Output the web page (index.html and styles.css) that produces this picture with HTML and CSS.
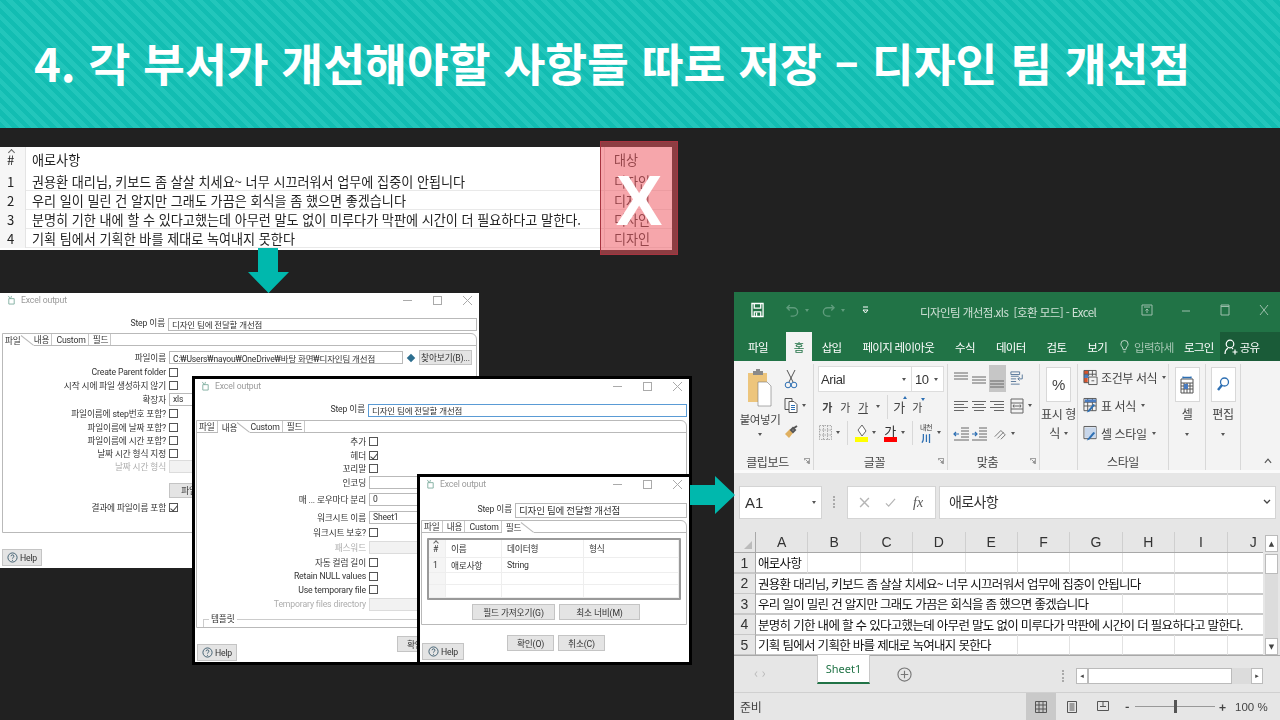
FILE: index.html
```html
<!DOCTYPE html>
<html lang="ko">
  <head>
    <meta charset="UTF-8" />
    <title>4. 각 부서가 개선해야할 사항들 따로 저장</title>
    <link rel="stylesheet" href="styles.css">
  </head>
  <body>
    <svg class="defs" width="0" height="0">
      <symbol id="lines-left" viewBox="0 0 16 12"><path d="M1 1.5h14M1 4.5h10M1 7.5h14M1 10.5h10" /></symbol>
      <symbol id="lines-center" viewBox="0 0 16 12"><path d="M1 1.5h14M3 4.5h10M1 7.5h14M3 10.5h10" /></symbol>
      <symbol id="lines-right" viewBox="0 0 16 12"><path d="M1 1.5h14M5 4.5h10M1 7.5h14M5 10.5h10" /></symbol>
      <symbol id="help-mark" viewBox="0 0 12 12"><circle cx="6" cy="6" r="5" /><path d="M4.4 4.6c0-2 3.2-2 3.2 0 0 1.3-1.6 1.2-1.6 2.6M6 8.6v1" /></symbol>
      <symbol id="launcher" viewBox="0 0 8 8"><path d="M.5 3V.5H7.5V7.5H5M2 2l4 4M6 3.5V6H3.5" /></symbol>
      <symbol id="win-icon" viewBox="0 0 10 11"><path d="M2 4h6v6H2zM1.500 1l2 3M4 4l1-3" /></symbol>
    </svg>

    <div class="slide">
      <header class="banner">
        <h1>4. 각 부서가 개선해야할 사항들 따로 저장 – 디자인 팀 개선점</h1>
      </header>

      <!-- list of complaints with the column that gets dropped -->
      <div class="list">
        <div class="list-row list-head">
          <span class="list-num"><i class="caret"></i>#</span>
          <span class="list-text">애로사항</span>
          <span class="list-dept">대상</span>
        </div>
        <div class="list-row">
          <span class="list-num">1</span>
          <span class="list-text">권용환 대리님, 키보드 좀 살살 치세요~ 너무 시끄러워서 업무에 집중이 안됩니다</span>
          <span class="list-dept">디자인</span>
        </div>
        <div class="list-row">
          <span class="list-num">2</span>
          <span class="list-text">우리 일이 밀린 건 알지만 그래도 가끔은 회식을 좀 했으면 좋겠습니다</span>
          <span class="list-dept">디자인</span>
        </div>
        <div class="list-row">
          <span class="list-num">3</span>
          <span class="list-text">분명히 기한 내에 할 수 있다고했는데 아무런 말도 없이 미루다가 막판에 시간이 더 필요하다고 말한다.</span>
          <span class="list-dept">디자인</span>
        </div>
        <div class="list-row">
          <span class="list-num">4</span>
          <span class="list-text">기획 팀에서 기획한 바를 제대로 녹여내지 못한다</span>
          <span class="list-dept">디자인</span>
        </div>
      </div>
      <div class="drop-mark">X</div>

      <svg class="arrow arrow-down" viewBox="0 0 42 46"><path d="M10 0h20v24h11L20.500 45 0 24h10z" /></svg>
      <svg class="arrow arrow-right" viewBox="0 0 46 40"><path d="M0 9h25V0l20 19-20 19v-9H0z" /></svg>

      <!-- first dialog: file tab -->
      <section class="win win-a">
        <div class="win-title">
          <svg class="win-icon"><use href="#win-icon" /></svg>
          <span>Excel output</span>
          <span class="win-btns"><i class="b-min"></i><i class="b-max"></i><i class="b-close"></i></span>
        </div>
        <div class="step">
          <label>Step 이름</label>
          <div class="field">디자인 팀에 전달할 개선점</div>
        </div>
        <div class="folder">
          <div class="tabs">
            <span class="tab on">파일</span><span class="tab">내용</span><span class="tab">Custom</span><span class="tab">필드</span>
          </div>
          <div class="form form-a">
            <label>파일이름</label>
            <div class="path-row">
              <div class="field">C:₩Users₩nayou₩OneDrive₩바탕 화면₩디자인팀 개선점</div>
              <i class="var-mark"></i>
              <button class="btn btn-browse">찾아보기(B)...</button>
            </div>
            <label>Create Parent folder</label><i class="chk"></i>
            <label>시작 시에 파일 생성하지 않기</label><i class="chk"></i>
            <label>확장자</label><div class="field">xls</div>
            <label>파일이름에 step번호 포함?</label><i class="chk"></i>
            <label>파일이름에 날짜 포함?</label><i class="chk"></i>
            <label>파일이름에 시간 포함?</label><i class="chk"></i>
            <label>날짜 시간 형식 지정</label><i class="chk"></i>
            <label class="off">날짜 시간 형식</label><div class="field field-off"></div>
            <span></span><span></span>
            <span></span><button class="btn btn-show">파일이름 보기...</button>
            <label>결과에 파일이름 포함</label><i class="chk chk-on"></i>
          </div>
        </div>
        <div class="foot foot-a">
          <button class="btn btn-help"><svg><use href="#help-mark" /></svg>Help</button>
        </div>
      </section>

      <!-- second dialog: content tab -->
      <section class="win win-b">
        <div class="win-title">
          <svg class="win-icon"><use href="#win-icon" /></svg>
          <span>Excel output</span>
          <span class="win-btns"><i class="b-min"></i><i class="b-max"></i><i class="b-close"></i></span>
        </div>
        <div class="step">
          <label>Step 이름</label>
          <div class="field field-focus">디자인 팀에 전달할 개선점</div>
        </div>
        <div class="folder">
          <div class="tabs">
            <span class="tab">파일</span><span class="tab on">내용</span><span class="tab">Custom</span><span class="tab">필드</span>
          </div>
          <div class="form form-b">
            <label>추가</label><i class="chk"></i>
            <label>헤더</label><i class="chk chk-on"></i>
            <label>꼬리말</label><i class="chk"></i>
            <label>인코딩</label><div class="field"></div>
            <label>매 ... 로우마다 분리</label><div class="field">0</div>
            <label>워크시트 이름</label><div class="field">Sheet1</div>
            <label>워크시트 보호?</label><i class="chk"></i>
            <label class="off">패스워드</label><div class="field field-off"></div>
            <label>자동 컬럼 길이</label><i class="chk"></i>
            <label>Retain NULL values</label><i class="chk"></i>
            <label>Use temporary file</label><i class="chk"></i>
            <label class="off">Temporary files directory</label><div class="field field-off"></div>
          </div>
          <div class="legend"><span>템플릿</span></div>
        </div>
        <div class="foot foot-b">
          <button class="btn btn-help"><svg><use href="#help-mark" /></svg>Help</button>
          <button class="btn btn-ok">확인(O)</button>
        </div>
      </section>

      <!-- third dialog: field tab -->
      <section class="win win-c">
        <div class="win-title">
          <svg class="win-icon"><use href="#win-icon" /></svg>
          <span>Excel output</span>
          <span class="win-btns"><i class="b-min"></i><i class="b-max"></i><i class="b-close"></i></span>
        </div>
        <div class="step">
          <label>Step 이름</label>
          <div class="field">디자인 팀에 전달할 개선점</div>
        </div>
        <div class="folder">
          <div class="tabs">
            <span class="tab">파일</span><span class="tab">내용</span><span class="tab">Custom</span><span class="tab on">필드</span>
          </div>
          <div class="fields">
            <span class="f-num f-sort"><i class="caret"></i>#</span><span>이름</span><span>데이터형</span><span>형식</span>
            <span class="f-num">1</span><span>애로사항</span><span>String</span><span></span>
            <span class="f-num"></span><span></span><span></span><span></span>
            <span class="f-num"></span><span></span><span></span><span></span>
          </div>
          <div class="field-btns">
            <button class="btn">필드 가져오기(G)</button>
            <button class="btn">최소 너비(M)</button>
          </div>
        </div>
        <div class="foot foot-c">
          <button class="btn btn-help"><svg><use href="#help-mark" /></svg>Help</button>
          <button class="btn btn-ok">확인(O)</button>
          <button class="btn btn-ok">취소(C)</button>
        </div>
      </section>

      <!-- excel window -->
      <section class="excel">
        <div class="xl-title">
          <svg class="xl-save" viewBox="0 0 14 16"><path d="M1 1h12v14H1zM3.500 1v5h7V1M3.500 15v-5h7v5M6 11v4" /></svg>
          <svg class="xl-undo" viewBox="0 0 14 14"><path d="M4 1L1 4l3 3M1 4h7a4.500 4.500 0 0 1 0 9H5" /></svg>
          <i class="xl-drop"></i>
          <svg class="xl-undo xl-redo" viewBox="0 0 14 14"><path d="M10 1l3 3-3 3M13 4H6a4.500 4.500 0 0 0 0 9h3" /></svg>
          <i class="xl-drop"></i>
          <svg class="xl-qat" viewBox="0 0 7 8"><path d="M1 1h5M1 4h5l-2.500 3z" /></svg>
          <span class="xl-name">디자인팀 개선점.xls  [호환 모드] - Excel</span>
          <svg class="xl-wbtn" viewBox="0 0 12 12"><path d="M1 1h10v10H1zM3 3h6M6 9V5M4.500 6.500L6 5l1.500 1.500" /></svg>
          <svg class="xl-wbtn" viewBox="0 0 12 12"><path d="M2 7h8" /></svg>
          <svg class="xl-wbtn" viewBox="0 0 12 12"><path d="M2 1h8v10H2zM2 2.500h8" /></svg>
          <svg class="xl-wbtn" viewBox="0 0 12 12"><path d="M2 1l8 10M10 1L2 11" /></svg>
        </div>
        <nav class="xl-tabs">
          <span>파일</span>
          <span class="xl-home">홈</span>
          <span>삽입</span>
          <span>페이지 레이아웃</span>
          <span>수식</span>
          <span>데이터</span>
          <span>검토</span>
          <span>보기</span>
          <span class="xl-tell">
            <svg viewBox="0 0 10 15"><path d="M3.500 11h3M3.800 13.500h2.400M3.500 11C3.500 8 1 7.500 1 4.800a4 4 0 0 1 8 0C9 7.500 6.500 8 6.500 11" /></svg>입력하세
          </span>
          <span class="xl-login">로그인</span>
          <span class="xl-share">
            <svg viewBox="0 0 14 16"><circle cx="6" cy="5" r="3.800" /><path d="M1 15c0-3 1.500-5 3-6M8 9l1 1M11 10.500v5M8.500 13h5" /></svg>공유
          </span>
        </nav>

        <div class="ribbon">
          <div class="rb-group rb-clip">
            <div class="rb-body clip-body">
              <div class="paste">
                <svg class="paste-ic" viewBox="0 0 24 38">
                  <path class="tan" d="M0 4h19v29H0z" />
                  <path class="gray" d="M5 2h3V0h4v2h3v4H5z" />
                  <path class="sheet" d="M10 13h9l4 4v20H10z" />
                </svg>
                <span>붙여넣기</span>
                <i class="down"></i>
              </div>
              <div class="clip-tools">
                <svg viewBox="0 0 14 20"><path class="ink" d="M3 1l6 12M11 1L5 13" /><circle class="blue" cx="4" cy="16" r="2.800" /><circle class="blue" cx="10" cy="16" r="2.800" /></svg>
                <span class="with-down"><svg viewBox="0 0 14 16"><path class="ink" d="M1 1h7v11H1z" /><path class="sheet ink" d="M5 4h5l3 3v8H5z" /><path class="blue" d="M7 8h4M7 10h4M7 12h4" /></svg><i class="down"></i></span>
                <svg viewBox="0 0 14 14"><path class="tan-fill" d="M1 9l5-5 3 4-4 5z" /><path class="ink ink-thick" d="M7 5l2-2 2 2-2 2zM10 3l3-2" /></svg>
              </div>
            </div>
            <div class="rb-label"><span></span><span>클립보드</span><svg class="launch"><use href="#launcher" /></svg></div>
          </div>

          <div class="rb-group rb-font">
            <div class="rb-body font-body">
              <div class="font-combo">
                <span class="combo combo-name">Arial<i class="down"></i></span><span class="combo combo-size">10<i class="down"></i></span>
              </div>
              <div class="font-row">
                <b class="g">가</b><em class="g">가</em><u class="g">가</u><i class="down"></i>
                <span class="v-sep"></span>
                <span class="g g-big">가<i class="tip-up"></i></span><span class="g g-small">가<i class="tip-down"></i></span>
              </div>
              <div class="font-row font-row-3">
                <svg class="border-ic" viewBox="0 0 13 15"><path d="M.5 .5h12v14H.5zM.5 5h12M.5 10h12M4.500 .5v14M8.500 .5v14" /></svg><i class="down"></i>
                <span class="v-sep"></span>
                <span class="swatch-ic"><svg viewBox="0 0 13 13"><path d="M3 6l4-5 4 6-4 5z" /></svg><i class="bar bar-yellow"></i></span><i class="down"></i>
                <span class="swatch-ic swatch-text">가<i class="bar bar-red"></i></span><i class="down"></i>
                <span class="v-sep"></span>
                <span class="phon"><span>내천</span><b>川</b></span><i class="down"></i>
              </div>
            </div>
            <div class="rb-label"><span></span><span>글꼴</span><svg class="launch"><use href="#launcher" /></svg></div>
          </div>

          <div class="rb-group rb-align">
            <div class="rb-body align-body">
              <svg class="al"><path d="M1 2h14M1 5h14M1 8h14" /></svg>
              <svg class="al"><path d="M1 6h14M1 9h14M1 12h14" /></svg>
              <span class="al-on"><svg class="al"><path d="M1 6h14M1 9h14M1 12h14" /></svg></span>
              <svg class="al-wrap" viewBox="0 0 16 16"><path d="M1 1h10v3H1zM1 6h9M1 9h6M1 12h6M1 15h10M14 4v5H9M11 7L9 9l2 2" /></svg>
              <svg class="al"><use href="#lines-left" /></svg>
              <svg class="al"><use href="#lines-center" /></svg>
              <svg class="al"><use href="#lines-right" /></svg>
              <span class="with-down"><svg class="al-wrap" viewBox="0 0 14 16"><path d="M1 1h12v14H1zM1 5h12M1 11h12M3 8h8M4 6.500L3 8l1 1.500M10 6.500L11 8l-1 1.500" /></svg><i class="down"></i></span>
              <svg class="al al-indent"><path class="blue" d="M6 7H1M3 5L1 7l2 2" /><path d="M8 1h8M8 4h8M8 7h8M8 10h8M1 13h15" /></svg>
              <svg class="al al-indent"><path class="blue" d="M1 7h5M4 5l2 2-2 2" /><path d="M8 1h8M8 4h8M8 7h8M8 10h8M1 13h15" /></svg>
              <span class="with-down al-orient"><svg class="al-wrap" viewBox="0 0 16 16"><path d="M2 11l7-7M5 13l7-7M9 4l5 5-5 5" /></svg><i class="down"></i></span>
            </div>
            <div class="rb-label"><span></span><span>맞춤</span><svg class="launch"><use href="#launcher" /></svg></div>
          </div>

          <div class="rb-group rb-num">
            <div class="rb-body big-body">
              <span class="big-box big-percent">%</span>
              <span class="big-text">표시 형</span>
              <span class="big-text">식<i class="down"></i></span>
            </div>
            <div class="rb-label"><span></span><span></span><span></span></div>
          </div>

          <div class="rb-group rb-style">
            <div class="rb-body style-body">
              <span class="style-row"><svg viewBox="0 0 16 17"><path class="red-fill" d="M1 1h5v4H1zM1 9h4v5H1z" /><path class="blue-fill" d="M1 5h5v4H1z" /><path class="ink" d="M1 1h13v6M1 1v13h5M6 1v6M10 1v6M1 5h13M6 8h9v8H6zM9 12h3" /></svg>조건부 서식<i class="down"></i></span>
              <span class="style-row"><svg viewBox="0 0 16 17"><path class="ink" d="M1 1h13v13H1zM1 5h13M1 9h13M5 1v13M10 1v13" /><path class="blue-fill" d="M2 2h12v3H2z" /><path class="pen" d="M4 16l3-1 6-7-2-1-6 7z" /></svg>표 서식<i class="down"></i></span>
              <span class="style-row"><svg viewBox="0 0 16 17"><path class="ink" d="M1 1h13v13H1z" /><path class="pale-fill" d="M2 2h12v11H2z" /><path class="pen" d="M4 16l3-1 6-7-2-1-6 7z" /></svg>셀 스타일<i class="down"></i></span>
            </div>
            <div class="rb-label"><span></span><span>스타일</span><span></span></div>
          </div>

          <div class="rb-group rb-cell">
            <div class="rb-body big-body">
              <span class="big-box"><svg viewBox="0 0 14 18"><path class="ink" d="M1 3h12v14H1zM1 7h12M1 10h12M1 13h12M4 7v10M7 7v10M10 7v10" /><path class="blue-fill" d="M4 8h4v5H4z" /><path class="blue-line" d="M3 1.500h8M3 .5v2M11 .5v2" /></svg></span>
              <span class="big-text">셀</span>
              <i class="down"></i>
            </div>
            <div class="rb-label"><span></span><span></span><span></span></div>
          </div>

          <div class="rb-group rb-edit">
            <div class="rb-body big-body">
              <span class="big-box"><svg viewBox="0 0 14 18"><circle class="blue-line" cx="8.500" cy="6" r="4" /><path class="blue-line thick" d="M6 9l-4 5" /></svg></span>
              <span class="big-text">편집</span>
              <i class="down"></i>
            </div>
            <div class="rb-label"><span></span><span></span><span></span></div>
          </div>

          <div class="rb-collapse"><svg viewBox="0 0 9 6"><path d="M1 5l3.500-4L8 5" /></svg></div>
        </div>

        <div class="xl-formula">
          <div class="name-box">A1<i class="down"></i></div>
          <span class="grip"></span>
          <div class="fx-box">
            <svg viewBox="0 0 10 10"><path class="dim" d="M1 1l8 8M9 1L1 9" /></svg>
            <svg viewBox="0 0 12 10"><path class="dim" d="M1 6l3 3 7-8" /></svg>
            <em>fx</em>
          </div>
          <div class="formula-box">애로사항<svg viewBox="0 0 8 5"><path d="M1 1l3 3 3-3" /></svg></div>
        </div>

        <div class="sheet">
          <div class="cols">
            <span class="corner"></span>
            <span>A</span><span>B</span><span>C</span><span>D</span><span>E</span><span>F</span><span>G</span><span>H</span><span>I</span><span>J</span>
          </div>
          <div class="s-row">
            <span class="s-head">1</span><span class="cell">애로사항</span>
            <span class="cell"></span><span class="cell"></span><span class="cell"></span><span class="cell"></span><span class="cell"></span><span class="cell"></span><span class="cell"></span><span class="cell"></span><span class="cell"></span>
          </div>
          <div class="s-row">
            <span class="s-head">2</span><span class="cell span-8">권용환 대리님, 키보드 좀 살살 치세요~ 너무 시끄러워서 업무에 집중이 안됩니다</span>
            <span class="cell"></span><span class="cell"></span>
          </div>
          <div class="s-row">
            <span class="s-head">3</span><span class="cell span-7">우리 일이 밀린 건 알지만 그래도 가끔은 회식을 좀 했으면 좋겠습니다</span>
            <span class="cell"></span><span class="cell"></span><span class="cell"></span>
          </div>
          <div class="s-row">
            <span class="s-head">4</span><span class="cell span-10">분명히 기한 내에 할 수 있다고했는데 아무런 말도 없이 미루다가 막판에 시간이 더 필요하다고 말한다.</span>
          </div>
          <div class="s-row">
            <span class="s-head">5</span><span class="cell span-5">기획 팀에서 기획한 바를 제대로 녹여내지 못한다</span>
            <span class="cell"></span><span class="cell"></span><span class="cell"></span><span class="cell"></span><span class="cell"></span>
          </div>
          <div class="s-row s-row-cut">
            <span class="s-head"></span>
            <span class="cell"></span><span class="cell"></span><span class="cell"></span><span class="cell"></span><span class="cell"></span><span class="cell"></span><span class="cell"></span><span class="cell"></span><span class="cell"></span><span class="cell"></span>
          </div>
          <div class="v-scroll">
            <span class="sb-btn">▲</span><span class="sb-thumb"></span><span class="sb-track"></span><span class="sb-btn">▼</span>
          </div>
        </div>

        <div class="xl-tabsbar">
          <span class="nav-arrows">‹ <i></i> ›</span>
          <span class="sheet-tab">Sheet1</span>
          <svg class="add-sheet" viewBox="0 0 16 16"><circle cx="8" cy="8" r="7" /><path d="M8 4v8M4 8h8" /></svg>
          <span class="grip"></span>
          <div class="h-scroll">
            <span class="sb-btn">◂</span><span class="sb-thumb"></span><span class="sb-track"></span><span class="sb-btn">▸</span>
          </div>
        </div>

        <footer class="xl-status">
          <span class="ready">준비</span>
          <span class="view view-on"><svg viewBox="0 0 12 12"><path d="M.5 .5h11v11H.5zM.5 4h11M.5 8h11M4 .5v11M8 .5v11" /></svg></span>
          <span class="view"><svg viewBox="0 0 12 12"><path d="M1.500 .5h9v11h-9zM3.500 3h5M3.500 5h5M3.500 7h5M3.500 9h5" /></svg></span>
          <span class="view"><svg viewBox="0 0 12 12"><path d="M.5 .5h11v9H.5zM6 .5v5M3 5.500h6" /></svg></span>
          <span class="zoom-minus">-</span>
          <span class="zoom-track"><i></i></span>
          <span class="zoom-plus">+</span>
          <span class="zoom-val">100 %</span>
        </footer>
      </section>
    </div>
  </body>
</html>
```

FILE: styles.css
```css
:root {
  --teal: #12bdb2;
  --teal-light: #22c6bb;
  --arrow: #00b8ad;
  --slide-bg: #212121;
  --xl-green: #217346;
  --xl-gray: #e6e6e6;
  --ribbon: #f3f3f3;
  --line: #c6c6c6;
  --ko: "Noto Sans CJK KR", "Noto Sans", sans-serif;
}

* {
  box-sizing: border-box;
}

html,
body {
  margin: 0;
  height: 100%;
  overflow: hidden;
}

body {
  font-family: var(--ko);
  background: var(--slide-bg);
}

i,
em {
  font-style: normal;
}

.defs {
  display: block;
  height: 0;
}

.slide {
  position: relative;
  width: 1280px;
  height: 720px;
  overflow: hidden;
  background: var(--slide-bg);
}

/* Banner */
.banner {
  height: 128px;
  display: flex;
  align-items: center;
  padding: 0 0 2px 34px;
  background: repeating-linear-gradient(45deg, var(--teal) 0 4.5px, var(--teal-light) 4.5px 9px);
}

.banner h1 {
  margin: 0;
  color: #fff;
  font-size: 45.500px;
  font-weight: 700;
  white-space: nowrap;
  line-height: 1;
}

/* Top list */
.list {
  position: absolute;
  left: 0;
  top: 147px;
  width: 672px;
  height: 103px;
  background: #fff;
  filter: blur(0.3px);
}

.list-row {
  display: grid;
  grid-template-columns: 26px 578px 68px;
  height: 19px;
  align-items: center;
  font-size: 13.100px;
  color: #222;
  border-bottom: 1px solid #e9e9e9;
  white-space: nowrap;
}

.list-head {
  height: 25px;
  border-bottom: none;
}

.list-num {
  position: relative;
  height: 100%;
  display: flex;
  align-items: center;
  padding-left: 7px;
  background: #f6f6f6;
  border-right: 1px solid #e4e4e4;
}

.list-text {
  padding-left: 6px;
}

.list-dept {
  padding-left: 9px;
  height: 100%;
  display: flex;
  align-items: center;
  border-left: 1px solid #e4e4e4;
  color: #333;
}

.caret {
  position: absolute;
  left: 9px;
  top: 3px;
  width: 5px;
  height: 5px;
  border-left: 1px solid #666;
  border-top: 1px solid #666;
  transform: rotate(45deg);
}

.drop-mark {
  position: absolute;
  left: 600px;
  top: 141px;
  width: 78px;
  height: 114px;
  display: flex;
  align-items: center;
  justify-content: center;
  padding: 6px 0 0 0;
  background: rgba(238, 87, 96, 0.53);
  border: 1px solid #a83440;
  color: #fff;
  font-family: "Liberation Sans", sans-serif;
  font-size: 70px;
  font-weight: 700;
  line-height: 1;
}

/* Arrows */
.arrow {
  position: absolute;
  z-index: 5;
  fill: var(--arrow);
}

.arrow-down {
  left: 248px;
  top: 248px;
  width: 42px;
  height: 46px;
}

.arrow-right {
  left: 690px;
  top: 476px;
  width: 46px;
  height: 40px;
}

/* Dialog windows */
.win {
  position: absolute;
  background: #fff;
  color: #333;
  font-family: Roboto, var(--ko);
  font-size: 8.700px;
  letter-spacing: -0.150px;
  filter: blur(0.35px);
  display: flex;
  flex-direction: column;
}

.win-a {
  left: 0;
  top: 293px;
  width: 479px;
  height: 275px;
  padding: 0 2px;
}

.win-b {
  left: 192px;
  top: 376px;
  width: 500px;
  height: 289px;
  border: 3px solid #000;
  padding: 0 2px 0 1px;
}

.win-c {
  left: 417px;
  top: 474px;
  width: 275px;
  height: 191px;
  border: 3px solid #000;
  padding: 0 2px 0 1px;
}

.win-title {
  height: 18px;
  display: flex;
  align-items: center;
  gap: 5px;
  color: #9a9a9a;
  padding: 0 0 4px 5px;
  flex: none;
}

.win-icon {
  width: 9px;
  height: 10px;
  fill: none;
  stroke: #7fae9f;
  stroke-width: 1;
}

.win-btns {
  margin-left: auto;
  display: flex;
  gap: 21px;
  padding-right: 5px;
  align-items: center;
}

.win-btns i {
  display: block;
  width: 9px;
  height: 9px;
}

.b-min {
  border-bottom: 1px solid #aaa;
  transform: translateY(-4px);
}

.b-max {
  border: 1px solid #aaa;
}

.b-close {
  background: linear-gradient(45deg, transparent 46%, #aaa 46% 54%, transparent 54%),
    linear-gradient(-45deg, transparent 46%, #aaa 46% 54%, transparent 54%);
}

.step {
  display: grid;
  align-items: center;
  gap: 3px;
  height: 15px;
  flex: none;
}

.step label {
  padding-bottom: 3px;
}

.win-a .step {
  grid-template-columns: 163px 1fr;
  margin-top: 5px;
}

.win-b .step {
  grid-template-columns: 169px 1fr;
  margin-top: 5px;
}

.win-c .step {
  grid-template-columns: 91px 1fr;
  margin-top: 7px;
}

label {
  text-align: right;
  white-space: nowrap;
}

label.off {
  color: #adadad;
}

.field {
  height: 13px;
  display: flex;
  align-items: center;
  padding-left: 3px;
  border: 1px solid #b9b9b9;
  background: #fff;
  white-space: nowrap;
  overflow: hidden;
  font-size: 8.500px;
}

.win-c .field {
  height: 15px;
  font-size: 9.500px;
}

.field-off {
  background: #f2f2f2;
  border-color: #dcdcdc;
}

.field-focus {
  border-color: #5a9bd5;
}

.folder {
  flex: none;
  margin-top: 3px;
  border: 1px solid #b9b9b9;
  border-radius: 0 6px 0 0;
}

.win-a .folder {
  height: 200px;
  margin-top: 2px;
}

.win-b .folder {
  height: 208px;
}

.win-c .folder {
  height: 105px;
}

.tabs {
  display: flex;
  height: 12px;
  align-items: center;
  border-bottom: 1px solid #b9b9b9;
}

.tab {
  height: 100%;
  display: flex;
  align-items: center;
  padding: 0 2px 0 4px;
  border-right: 1px solid #c8c8c8;
  white-space: nowrap;
}

.tab:first-child {
  padding-left: 2px;
}

.tab.on {
  position: relative;
  align-self: flex-start;
  height: 12px;
  background: #fff;
  border-right: none;
  padding-right: 13px;
}

.tab.on + .tab {
  padding-left: 0;
}

.tab.on::after {
  content: "";
  position: absolute;
  left: calc(100% - 13px);
  top: 1px;
  width: 16px;
  height: 1px;
  background: #b9b9b9;
  transform: rotate(38deg);
  transform-origin: left;
}

.form {
  display: grid;
  align-items: center;
  column-gap: 3px;
}

.win-a .form {
  grid-template-columns: 163px 1fr;
  margin: 4px 0 0 0;
  padding-right: 4px;
}

.form-a {
  grid-template-rows: 15px 14px 13px 14px 15px 13px 13px 13px 13px 10px 15px 18px;
}

.win-b .form {
  grid-template-columns: 169px 1fr;
  padding-right: 4px;
  margin-top: 1px;
}

.form-b {
  grid-template-rows: 14px 14px 13px 14px 20px 16px 14px 16px 14px 14px 13px 16px;
}

.form .field {
  width: 100%;
}

.path-row {
  display: flex;
  align-items: center;
  gap: 2px;
}

.path-row .field {
  flex: 1;
  width: auto;
}

.var-mark {
  width: 6px;
  height: 6px;
  background: #2c6e8f;
  transform: rotate(45deg);
  margin: 0 3px;
}

.chk {
  display: block;
  width: 9px;
  height: 9px;
  border: 1px solid #555;
  background: #fff;
  position: relative;
}

.chk-on::after {
  content: "";
  position: absolute;
  left: 2px;
  top: 0;
  width: 3px;
  height: 6px;
  border-right: 1px solid #444;
  border-bottom: 1px solid #444;
  transform: rotate(40deg);
}

.btn {
  font: inherit;
  letter-spacing: inherit;
  color: #333;
  background: #e4e4e4;
  border: 1px solid #c4c4c4;
  padding: 0;
  white-space: nowrap;
  height: 16px;
}

.btn-browse {
  width: 53px;
  height: 15px;
}

.btn-show {
  width: 80px;
  height: 15px;
  justify-self: start;
}

.legend {
  position: relative;
  margin: 7px 0 0 6px;
  height: 8px;
  border-top: 1px solid #ccc;
  border-left: 1px solid #ccc;
}

.legend span {
  position: absolute;
  left: 5px;
  top: -7px;
  background: #fff;
  padding: 0 2px;
  line-height: 12px;
}

.foot {
  display: flex;
  align-items: flex-start;
  flex: none;
}

.foot-a {
  margin-top: 16px;
}

.foot-b {
  margin-top: 8px;
  padding-left: 1px;
}

.foot-c {
  margin-top: 10px;
  padding-left: 1px;
}

.btn-help {
  display: flex;
  align-items: center;
  justify-content: center;
  gap: 2px;
  width: 40px;
  height: 17px;
}

.foot-b .btn-help,
.foot-c .btn-help {
  margin-top: 8px;
}

.foot-c .btn-help {
  width: 42px;
}

.btn-help svg {
  width: 11px;
  height: 11px;
  fill: none;
  stroke: #39596b;
  stroke-width: 1;
}

.btn-ok {
  width: 47px;
  margin-left: 4px;
}

.foot-b .btn-ok {
  margin-left: 160px;
}

.foot-c .btn-help + .btn-ok {
  margin-left: 43px;
}

/* Field table in the third dialog */
.fields {
  display: grid;
  grid-template-columns: 17px 56px 82px 1fr;
  grid-template-rows: 18px 15px 12px 13px;
  align-items: center;
  margin: 5px 5px 0;
  border: 2px solid #999;
  border-radius: 1px;
}

.fields > span {
  height: 100%;
  display: flex;
  align-items: center;
  padding-left: 5px;
  border-right: 1px solid #eee;
  border-bottom: 1px solid #eee;
  white-space: nowrap;
}

.fields .f-num {
  position: relative;
  background: #f5f5f5;
  padding-left: 4px;
}

.fields .caret {
  left: 5px;
  top: 1px;
  width: 4px;
  height: 4px;
}

.field-btns {
  display: flex;
  gap: 4px;
  margin-top: 4px;
  padding-left: 50px;
}

.field-btns .btn {
  width: 83px;
  height: 16px;
}

.field-btns .btn + .btn {
  width: 81px;
}

/* Excel window */
.excel {
  position: absolute;
  left: 734px;
  top: 292px;
  width: 546px;
  height: 428px;
  background: var(--xl-gray);
  color: #333;
  display: flex;
  flex-direction: column;
  filter: blur(0.3px);
}

.xl-title {
  height: 40px;
  display: flex;
  align-items: center;
  background: var(--xl-green);
  padding: 0 0 4px 17px;
  flex: none;
}

.xl-title svg {
  fill: none;
}

.xl-save {
  width: 13px;
  height: 16px;
  stroke: #fff;
  stroke-width: 1.400;
}

.xl-undo {
  width: 13px;
  height: 13px;
  margin-left: 22px;
  stroke: #5f9c7c;
  stroke-width: 1.500;
}

.xl-undo.xl-redo {
  margin-left: 13px;
}

.xl-drop {
  margin-left: 6px;
  border: 2px solid transparent;
  border-top: 3px solid #5f9c7c;
  margin-top: 3px;
}

.xl-qat {
  width: 7px;
  height: 8px;
  margin-left: 17px;
  stroke: #fff;
}

.xl-name {
  width: 174px;
  margin: 3px 0 0 51px;
  font-size: 11.500px;
  letter-spacing: -0.550px;
  color: #cfe0d6;
  white-space: pre;
  flex: none;
}

.xl-wbtn {
  width: 12px;
  height: 12px;
  stroke: #9dbfac;
  stroke-width: 1;
  margin-left: 27px;
}

.xl-name + .xl-wbtn {
  margin-left: 47px;
}

.xl-tabs {
  height: 29px;
  display: flex;
  align-items: center;
  gap: 21px;
  background: var(--xl-green);
  color: #fff;
  font-size: 11.500px;
  letter-spacing: -0.700px;
  padding-left: 14px;
  flex: none;
  white-space: nowrap;
}

.xl-home {
  align-self: stretch;
  display: flex;
  align-items: center;
  padding: 0 8px;
  margin: 0 -11px 0 -3px;
  background: var(--ribbon);
  color: var(--xl-green);
}

.xl-tell {
  display: flex;
  align-items: center;
  gap: 5px;
  color: #a6c7b4;
  margin-left: -8px;
  width: 57px;
}

.xl-tell svg {
  width: 9px;
  height: 15px;
  fill: none;
  stroke: #cfe0d6;
}

.xl-login {
  margin-left: -14px;
}

.xl-share {
  align-self: stretch;
  margin-left: -15px;
  flex: 1;
  display: flex;
  align-items: center;
  gap: 2px;
  padding-left: 4px;
  background: #1a5b38;
}

.xl-share svg {
  width: 14px;
  height: 16px;
  fill: none;
  stroke: #fff;
  stroke-width: 1.200;
}

/* Ribbon */
.ribbon {
  display: flex;
  height: 112px;
  background: var(--ribbon);
  border-bottom: 3px solid #fafafa;
  flex: none;
  font-size: 12px;
  letter-spacing: -0.4px;
}

.rb-group {
  display: flex;
  flex-direction: column;
  border-right: 1px solid #d8d8d8;
  margin-top: 3px;
  flex: none;
}

.rb-body {
  flex: 1;
  min-height: 0;
}

.rb-label {
  height: 20px;
  padding-top: 2px;
  display: grid;
  grid-template-columns: 1fr auto 1fr;
  align-items: center;
  justify-items: center;
  font-size: 12px;
  color: #444;
}

.rb-clip .rb-label span:nth-child(2),
.rb-font .rb-label span:nth-child(2),
.rb-align .rb-label span:nth-child(2) {
  margin-right: 12px;
}

.launch {
  justify-self: end;
  width: 6px;
  height: 6px;
  margin-right: 3px;
  fill: none;
  stroke: #777;
  stroke-width: 1;
}

.down {
  display: inline-block;
  width: 0;
  height: 0;
  border: 2.500px solid transparent;
  border-top: 3px solid #555;
  border-bottom: 0;
  flex: none;
}

.ink {
  fill: none;
  stroke: #555;
  stroke-width: 1;
}

.ink-thick {
  stroke-width: 2;
}

.blue {
  fill: none;
  stroke: #2d6fb3;
  stroke-width: 1;
}

.sheet {
  fill: #fff;
}

.tan {
  fill: #edc57c;
}

.gray {
  fill: #8a8a8a;
}

.tan-fill {
  fill: #e0b060;
}

.red-fill {
  fill: #d9532c;
}

.blue-fill {
  fill: #4a7cc0;
}

.pale-fill {
  fill: #c7d6ea;
}

.pen {
  fill: #2d6fb3;
}

.blue-line {
  fill: none;
  stroke: #2d6fb3;
  stroke-width: 1.300;
}

.thick {
  stroke-width: 2.400;
}

/* Clipboard group */
.rb-clip {
  width: 80px;
}

.clip-body {
  display: flex;
}

.paste {
  width: 47px;
  display: flex;
  flex-direction: column;
  align-items: center;
  padding: 5px 0 0 5px;
  color: #444;
}

.paste-ic {
  width: 24px;
  height: 38px;
  stroke: #777;
  stroke-width: 0.600;
}

.paste-ic .tan,
.paste-ic .gray {
  stroke: none;
}

.paste span {
  margin-top: 4px;
  font-size: 11.500px;
  white-space: nowrap;
}

.paste .down {
  margin-top: 6px;
}

.clip-tools {
  display: flex;
  flex-direction: column;
  align-items: flex-start;
  gap: 8px;
  padding: 5px 0 0 3px;
}

.clip-tools svg {
  width: 14px;
  height: 20px;
}

.clip-tools .with-down svg {
  height: 17px;
}

.with-down {
  display: flex;
  align-items: center;
  gap: 4px;
}

/* Font group */
.rb-font {
  width: 134px;
}

.font-body {
  padding: 2px 4px 0;
}

.font-combo {
  display: flex;
  height: 26px;
  background: #fff;
  border: 1px solid #ddd;
  width: 126px;
  font-family: "Liberation Sans", sans-serif;
}

.combo {
  display: flex;
  align-items: center;
  justify-content: space-between;
  padding: 0 5px 0 2px;
  font-size: 13px;
}

.combo-name {
  width: 93px;
  border-right: 1px solid #ddd;
}

.combo-size {
  flex: 1;
  padding-left: 3px;
}

.font-row {
  display: flex;
  align-items: center;
  height: 25px;
  margin-top: 2px;
  font-size: 11px;
}

.font-row-3 {
  margin-top: 1px;
}

.g {
  width: 18px;
  text-align: center;
  text-decoration: none;
  color: #444;
}

u.g {
  text-decoration: underline;
}

.g-big {
  position: relative;
  font-size: 13px;
  margin-left: -4px;
}

.g-small {
  position: relative;
  font-size: 11px;
}

.tip-up,
.tip-down {
  position: absolute;
  right: 1px;
  top: -1px;
  border: 2.500px solid transparent;
  border-bottom: 3px solid #2d6fb3;
  border-top: 0;
}

.tip-down {
  border-top: 3px solid #2d6fb3;
  border-bottom: 0;
}

.v-sep {
  width: 1px;
  height: 24px;
  background: #d8d8d8;
  margin: 0 6px 0 7px;
  flex: none;
}

.font-row .down {
  margin-left: 4px;
}

.border-ic {
  width: 13px;
  height: 15px;
  margin-left: 1px;
  fill: #eee;
  stroke: #999;
  stroke-width: 0.800;
  stroke-dasharray: 1.500 1;
}

.swatch-ic {
  width: 14px;
  display: flex;
  flex-direction: column;
  align-items: center;
  line-height: 13px;
  font-size: 13px;
}

.swatch-ic svg {
  width: 13px;
  height: 13px;
  fill: #fff;
  stroke: #666;
}

.swatch-text {
  margin-left: 7px;
}

.bar {
  display: block;
  width: 13px;
  height: 5px;
}

.bar-yellow {
  background: #ffff00;
}

.bar-red {
  background: #ff0000;
}

.phon {
  display: flex;
  flex-direction: column;
  align-items: center;
  font-size: 7px;
  line-height: 9px;
  width: 14px;
  white-space: nowrap;
}

.phon b {
  color: #2d6fb3;
  font-size: 10px;
  line-height: 11px;
}

/* Alignment group */
.rb-align {
  width: 92px;
}

.align-body {
  display: grid;
  grid-template-columns: 18px 18px 18px 1fr;
  grid-template-rows: 26px 29px 27px;
  padding: 1px 0 0 4px;
  align-items: center;
  justify-items: center;
  column-gap: 0;
}

.al {
  width: 16px;
  height: 14px;
  fill: none;
  stroke: #666;
  stroke-width: 1;
}

.al-indent .blue {
  stroke-width: 1.200;
}

.al-on {
  width: 17px;
  height: 27px;
  display: flex;
  align-items: flex-end;
  padding-bottom: 3px;
  background: #c6c6c6;
}

.al-wrap {
  width: 14px;
  height: 16px;
  fill: none;
  stroke: #666;
  stroke-width: 1;
  flex: none;
}

.align-body > .al-wrap {
  stroke: #4d6e92;
  justify-self: start;
  margin-left: 4px;
}

.align-body .with-down {
  justify-self: start;
  margin-left: 4px;
}

.align-body .al-orient {
  grid-column: span 2;
  margin-left: 5px;
}

/* Big button groups */
.rb-num {
  width: 38px;
}

.rb-style {
  width: 91px;
}

.rb-cell {
  width: 37px;
}

.rb-edit {
  width: 35px;
}

.big-body {
  display: flex;
  flex-direction: column;
  align-items: center;
  padding-top: 3px;
}

.big-box {
  width: 25px;
  height: 35px;
  display: flex;
  align-items: center;
  justify-content: center;
  background: #fff;
  border: 1px solid #d8d8d8;
  font-size: 15px;
  flex: none;
}

.big-box svg {
  width: 14px;
  height: 18px;
}

.big-percent {
  font-family: "Liberation Sans", sans-serif;
  color: #444;
}

.big-text {
  margin-top: 5px;
  white-space: nowrap;
  display: flex;
  align-items: center;
  gap: 4px;
  line-height: 14px;
  color: #444;
}

.big-body > .down {
  margin-top: 12px;
}

.style-body {
  display: flex;
  flex-direction: column;
  gap: 5px;
  padding: 2px 0 0 5px;
}

.style-row {
  display: flex;
  align-items: center;
  gap: 1px;
  height: 23px;
  white-space: nowrap;
  color: #444;
}

.style-row svg {
  width: 15px;
  height: 17px;
  margin-right: 2px;
  flex: none;
}

.style-row .down {
  margin-left: 4px;
}

.rb-collapse {
  flex: 1;
  display: flex;
  align-items: flex-end;
  justify-content: flex-end;
  padding: 0 8px 6px 0;
}

.rb-collapse svg {
  width: 8px;
  height: 6px;
  fill: none;
  stroke: #555;
  stroke-width: 1.300;
}

/* Formula bar */
.xl-formula {
  height: 59px;
  display: flex;
  align-items: flex-start;
  padding: 13px 4px 0 5px;
  flex: none;
}

.name-box {
  width: 83px;
  height: 33px;
  display: flex;
  align-items: center;
  justify-content: space-between;
  padding: 0 5px;
  background: #fff;
  border: 1px solid #d4d4d4;
  font-family: "Liberation Sans", sans-serif;
  font-size: 15px;
}

.grip {
  width: 2px;
  height: 12px;
  margin: 10px 12px 0 11px;
  border-left: 2px dotted #aaa;
  flex: none;
}

.fx-box {
  width: 89px;
  height: 33px;
  display: flex;
  align-items: center;
  gap: 15px;
  padding-left: 11px;
  background: #fff;
  border: 1px solid #d4d4d4;
}

.fx-box svg {
  width: 11px;
  height: 11px;
  fill: none;
}

.dim {
  stroke: #b5b5b5;
  stroke-width: 1.300;
}

.fx-box em {
  font-family: "Liberation Serif", serif;
  font-style: italic;
  font-size: 14px;
  color: #555;
  margin-left: 2px;
}

.formula-box {
  flex: 1;
  height: 33px;
  margin-left: 3px;
  display: flex;
  align-items: center;
  justify-content: space-between;
  padding: 0 4px 3px 9px;
  background: #fff;
  border: 1px solid #d4d4d4;
  font-size: 14px;
  letter-spacing: -0.6px;
}

.formula-box svg {
  width: 8px;
  height: 5px;
  fill: none;
  stroke: #444;
  stroke-width: 1.300;
}

/* Worksheet */
.sheet {
  position: relative;
  height: 123px;
  flex: none;
  background: var(--xl-gray);
  overflow: hidden;
}

.cols,
.s-row {
  display: grid;
  grid-template-columns: 22px repeat(10, 52.400px);
  width: 546px;
}

.cols {
  height: 21px;
  font-family: "Liberation Sans", sans-serif;
  font-size: 14px;
  color: #333;
  border-bottom: 1px solid #a8a8a8;
}

.cols span {
  display: flex;
  align-items: center;
  justify-content: center;
  border-right: 1px solid #cfcfcf;
}

.cols .corner {
  position: relative;
  border-right: 1px solid #a8a8a8;
}

.corner::after {
  content: "";
  position: absolute;
  right: 3px;
  bottom: 3px;
  border: 4px solid #bbb;
  border-top-color: transparent;
  border-left-color: transparent;
}

.s-row {
  height: 20.600px;
  background: #fff;
  font-size: 12.500px;
  letter-spacing: -0.700px;
}

.s-head {
  background: var(--xl-gray);
  display: flex;
  align-items: center;
  justify-content: center;
  border-right: 1px solid #a8a8a8;
  border-bottom: 2px solid #c8c8c8;
  font-family: "Liberation Sans", sans-serif;
  font-size: 14px;
  letter-spacing: 0;
}

.cell {
  display: flex;
  align-items: center;
  padding-left: 2px;
  border-right: 1px solid #e2e2e2;
  border-bottom: 2px solid #c8c8c8;
  white-space: nowrap;
  color: #111;
}

.span-5 {
  grid-column: span 5;
}

.span-7 {
  grid-column: span 7;
}

.span-8 {
  grid-column: span 8;
}

.span-10 {
  grid-column: span 10;
}

.v-scroll {
  position: absolute;
  right: 0;
  top: 0;
  width: 17px;
  height: 123px;
  padding: 3px 2px 0 2px;
  display: flex;
  flex-direction: column;
  background: var(--xl-gray);
}

.v-scroll .sb-btn {
  height: 17px;
  flex: none;
}

.v-scroll .sb-thumb {
  height: 20px;
  margin-top: 2px;
  flex: none;
}

.v-scroll .sb-track {
  flex: 1;
  background: #dcdcdc;
}

.sb-btn {
  display: flex;
  align-items: center;
  justify-content: center;
  background: #fff;
  border: 1px solid #bbb;
  font-family: "DejaVu Sans", sans-serif;
  font-size: 7px;
  color: #444;
}

.sb-thumb {
  background: #fff;
  border: 1px solid #bbb;
}

.xl-tabsbar {
  height: 37px;
  display: flex;
  align-items: flex-start;
  flex: none;
  border-top: 1px solid #a8a8a8;
}

.nav-arrows {
  width: 83px;
  padding: 6px 0 0 20px;
  color: #bbb;
  font-size: 14px;
  display: flex;
  gap: 17px;
}

.nav-arrows i {
  display: none;
}

.sheet-tab {
  width: 53px;
  height: 30px;
  margin-top: -2px;
  display: flex;
  align-items: center;
  justify-content: center;
  background: #fff;
  border: 1px solid #c8c8c8;
  border-top: none;
  border-bottom: 2px solid var(--xl-green);
  color: var(--xl-green);
  font-family: "Noto Sans", sans-serif;
  font-size: 11px;
}

.add-sheet {
  width: 15px;
  height: 15px;
  margin: 11px 0 0 27px;
  fill: none;
  stroke: #777;
  stroke-width: 1.200;
}

.xl-tabsbar .grip {
  margin: 14px 12px 0 150px;
}

.h-scroll {
  width: 187px;
  height: 16px;
  margin-top: 12px;
  display: flex;
}

.h-scroll .sb-btn {
  width: 12px;
}

.h-scroll .sb-thumb {
  width: 144px;
}

.h-scroll .sb-track {
  flex: 1;
  background: #dcdcdc;
}

.xl-status {
  flex: 1;
  display: flex;
  align-items: center;
  border-top: 1px solid #d0d0d0;
  padding-left: 6px;
  font-size: 12px;
  color: #444;
}

.ready {
  width: 286px;
  letter-spacing: -0.4px;
}

.view {
  width: 30px;
  height: 100%;
  display: flex;
  align-items: center;
  justify-content: center;
  margin-right: 1px;
}

.view-on {
  background: #c9c9c9;
}

.view svg {
  width: 12px;
  height: 12px;
  fill: none;
  stroke: #555;
  stroke-width: 1;
}

.zoom-minus {
  margin-left: 6px;
  width: 8px;
  font-weight: 700;
}

.zoom-track {
  position: relative;
  width: 80px;
  height: 1px;
  margin: 0 4px 0 2px;
  background: #999;
}

.zoom-track i {
  position: absolute;
  left: 39px;
  top: -6px;
  width: 3px;
  height: 13px;
  background: #555;
}

.zoom-plus {
  width: 14px;
  font-weight: 700;
}

.zoom-val {
  font-family: "Liberation Sans", sans-serif;
  font-size: 11.500px;
  margin-left: 2px;
  white-space: nowrap;
}
```
